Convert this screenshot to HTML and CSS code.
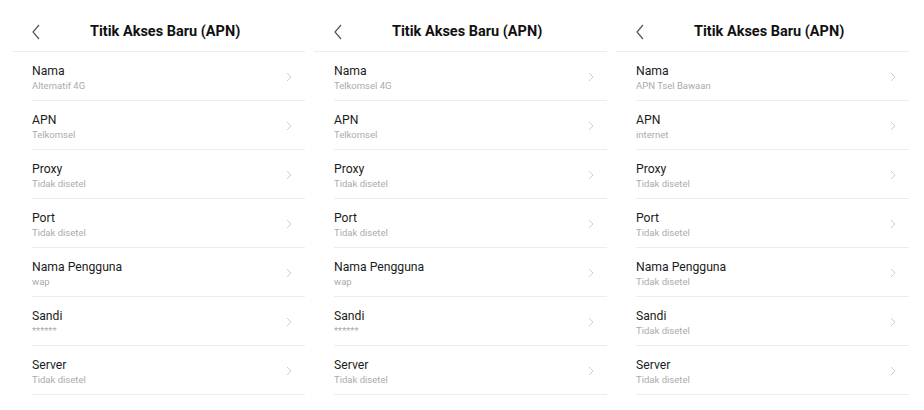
FILE: index.html
```html
<!DOCTYPE html>
<html lang="id">
<head>
    <meta charset="UTF-8">
    <meta name="viewport" content="width=device-width, initial-scale=1.0">
    <title>Titik Akses Baru (APN)</title>
    <link rel="stylesheet" href="styles.css">
</head>
<body>
    <div class="layar">
        <section class="panel">
            <header class="kepala">
                <svg class="kembali" width="10" height="16" viewBox="0 0 10 16"><path d="M8 1 L2 8 L8 15" fill="none" stroke="#555" stroke-width="1.2"/></svg>
                <h1>Titik Akses Baru (APN)</h1>
            </header>
            <ul class="daftar">
                <li><div><span class="judul">Nama</span><span class="nilai">Alternatif 4G</span></div><svg class="panah" width="6" height="10" viewBox="0 0 6 10"><path d="M1 1 L5 5 L1 9" fill="none" stroke="#cfcfcf" stroke-width="1"/></svg></li>
                <li><div><span class="judul">APN</span><span class="nilai">Telkomsel</span></div><svg class="panah" width="6" height="10" viewBox="0 0 6 10"><path d="M1 1 L5 5 L1 9" fill="none" stroke="#cfcfcf" stroke-width="1"/></svg></li>
                <li><div><span class="judul">Proxy</span><span class="nilai">Tidak disetel</span></div><svg class="panah" width="6" height="10" viewBox="0 0 6 10"><path d="M1 1 L5 5 L1 9" fill="none" stroke="#cfcfcf" stroke-width="1"/></svg></li>
                <li><div><span class="judul">Port</span><span class="nilai">Tidak disetel</span></div><svg class="panah" width="6" height="10" viewBox="0 0 6 10"><path d="M1 1 L5 5 L1 9" fill="none" stroke="#cfcfcf" stroke-width="1"/></svg></li>
                <li><div><span class="judul">Nama Pengguna</span><span class="nilai">wap</span></div><svg class="panah" width="6" height="10" viewBox="0 0 6 10"><path d="M1 1 L5 5 L1 9" fill="none" stroke="#cfcfcf" stroke-width="1"/></svg></li>
                <li><div><span class="judul">Sandi</span><span class="nilai">******</span></div><svg class="panah" width="6" height="10" viewBox="0 0 6 10"><path d="M1 1 L5 5 L1 9" fill="none" stroke="#cfcfcf" stroke-width="1"/></svg></li>
                <li><div><span class="judul">Server</span><span class="nilai">Tidak disetel</span></div><svg class="panah" width="6" height="10" viewBox="0 0 6 10"><path d="M1 1 L5 5 L1 9" fill="none" stroke="#cfcfcf" stroke-width="1"/></svg></li>
            </ul>
        </section>

        <section class="panel">
            <header class="kepala">
                <svg class="kembali" width="10" height="16" viewBox="0 0 10 16"><path d="M8 1 L2 8 L8 15" fill="none" stroke="#555" stroke-width="1.2"/></svg>
                <h1>Titik Akses Baru (APN)</h1>
            </header>
            <ul class="daftar">
                <li><div><span class="judul">Nama</span><span class="nilai">Telkomsel 4G</span></div><svg class="panah" width="6" height="10" viewBox="0 0 6 10"><path d="M1 1 L5 5 L1 9" fill="none" stroke="#cfcfcf" stroke-width="1"/></svg></li>
                <li><div><span class="judul">APN</span><span class="nilai">Telkomsel</span></div><svg class="panah" width="6" height="10" viewBox="0 0 6 10"><path d="M1 1 L5 5 L1 9" fill="none" stroke="#cfcfcf" stroke-width="1"/></svg></li>
                <li><div><span class="judul">Proxy</span><span class="nilai">Tidak disetel</span></div><svg class="panah" width="6" height="10" viewBox="0 0 6 10"><path d="M1 1 L5 5 L1 9" fill="none" stroke="#cfcfcf" stroke-width="1"/></svg></li>
                <li><div><span class="judul">Port</span><span class="nilai">Tidak disetel</span></div><svg class="panah" width="6" height="10" viewBox="0 0 6 10"><path d="M1 1 L5 5 L1 9" fill="none" stroke="#cfcfcf" stroke-width="1"/></svg></li>
                <li><div><span class="judul">Nama Pengguna</span><span class="nilai">wap</span></div><svg class="panah" width="6" height="10" viewBox="0 0 6 10"><path d="M1 1 L5 5 L1 9" fill="none" stroke="#cfcfcf" stroke-width="1"/></svg></li>
                <li><div><span class="judul">Sandi</span><span class="nilai">******</span></div><svg class="panah" width="6" height="10" viewBox="0 0 6 10"><path d="M1 1 L5 5 L1 9" fill="none" stroke="#cfcfcf" stroke-width="1"/></svg></li>
                <li><div><span class="judul">Server</span><span class="nilai">Tidak disetel</span></div><svg class="panah" width="6" height="10" viewBox="0 0 6 10"><path d="M1 1 L5 5 L1 9" fill="none" stroke="#cfcfcf" stroke-width="1"/></svg></li>
            </ul>
        </section>

        <section class="panel">
            <header class="kepala">
                <svg class="kembali" width="10" height="16" viewBox="0 0 10 16"><path d="M8 1 L2 8 L8 15" fill="none" stroke="#555" stroke-width="1.2"/></svg>
                <h1>Titik Akses Baru (APN)</h1>
            </header>
            <ul class="daftar">
                <li><div><span class="judul">Nama</span><span class="nilai">APN Tsel Bawaan</span></div><svg class="panah" width="6" height="10" viewBox="0 0 6 10"><path d="M1 1 L5 5 L1 9" fill="none" stroke="#cfcfcf" stroke-width="1"/></svg></li>
                <li><div><span class="judul">APN</span><span class="nilai">internet</span></div><svg class="panah" width="6" height="10" viewBox="0 0 6 10"><path d="M1 1 L5 5 L1 9" fill="none" stroke="#cfcfcf" stroke-width="1"/></svg></li>
                <li><div><span class="judul">Proxy</span><span class="nilai">Tidak disetel</span></div><svg class="panah" width="6" height="10" viewBox="0 0 6 10"><path d="M1 1 L5 5 L1 9" fill="none" stroke="#cfcfcf" stroke-width="1"/></svg></li>
                <li><div><span class="judul">Port</span><span class="nilai">Tidak disetel</span></div><svg class="panah" width="6" height="10" viewBox="0 0 6 10"><path d="M1 1 L5 5 L1 9" fill="none" stroke="#cfcfcf" stroke-width="1"/></svg></li>
                <li><div><span class="judul">Nama Pengguna</span><span class="nilai">Tidak disetel</span></div><svg class="panah" width="6" height="10" viewBox="0 0 6 10"><path d="M1 1 L5 5 L1 9" fill="none" stroke="#cfcfcf" stroke-width="1"/></svg></li>
                <li><div><span class="judul">Sandi</span><span class="nilai">Tidak disetel</span></div><svg class="panah" width="6" height="10" viewBox="0 0 6 10"><path d="M1 1 L5 5 L1 9" fill="none" stroke="#cfcfcf" stroke-width="1"/></svg></li>
                <li><div><span class="judul">Server</span><span class="nilai">Tidak disetel</span></div><svg class="panah" width="6" height="10" viewBox="0 0 6 10"><path d="M1 1 L5 5 L1 9" fill="none" stroke="#cfcfcf" stroke-width="1"/></svg></li>
            </ul>
        </section>
    </div>
</body>
</html>
```

FILE: styles.css
```css
body {
    font-family: Roboto, 'Noto Sans', sans-serif;
    background: #ffffff;
    color: #1c1c1c;
    margin: 0;
    padding: 0;
}

.layar {
    display: flex;
    gap: 9px;
    padding-left: 12px;
}

.panel {
    width: 293px;
}

.kepala {
    display: flex;
    align-items: center;
    height: 52px;
    box-sizing: border-box;
    padding: 12px 0 0 19px;
    border-bottom: 1px solid #ececec;
}

.kembali {
    display: block;
}

.kepala h1 {
    margin: 0 0 0 49px;
    font-size: 14.5px;
    font-weight: bold;
    color: #111;
}

.daftar {
    list-style: none;
    margin: 0;
    padding: 0 0 0 20px;
}

.daftar li {
    display: flex;
    align-items: center;
    justify-content: space-between;
    height: 49px;
    box-sizing: border-box;
    padding-top: 2px;
    border-bottom: 1px solid #ececec;
}

.daftar li div {
    display: flex;
    flex-direction: column;
}

.judul {
    font-size: 12.2px;
    line-height: 16px;
    color: #1c1c1c;
}

.nilai {
    font-size: 9.5px;
    line-height: 13px;
    color: #ababab;
}

.panah {
    display: block;
    margin-right: 13px;
}
```
